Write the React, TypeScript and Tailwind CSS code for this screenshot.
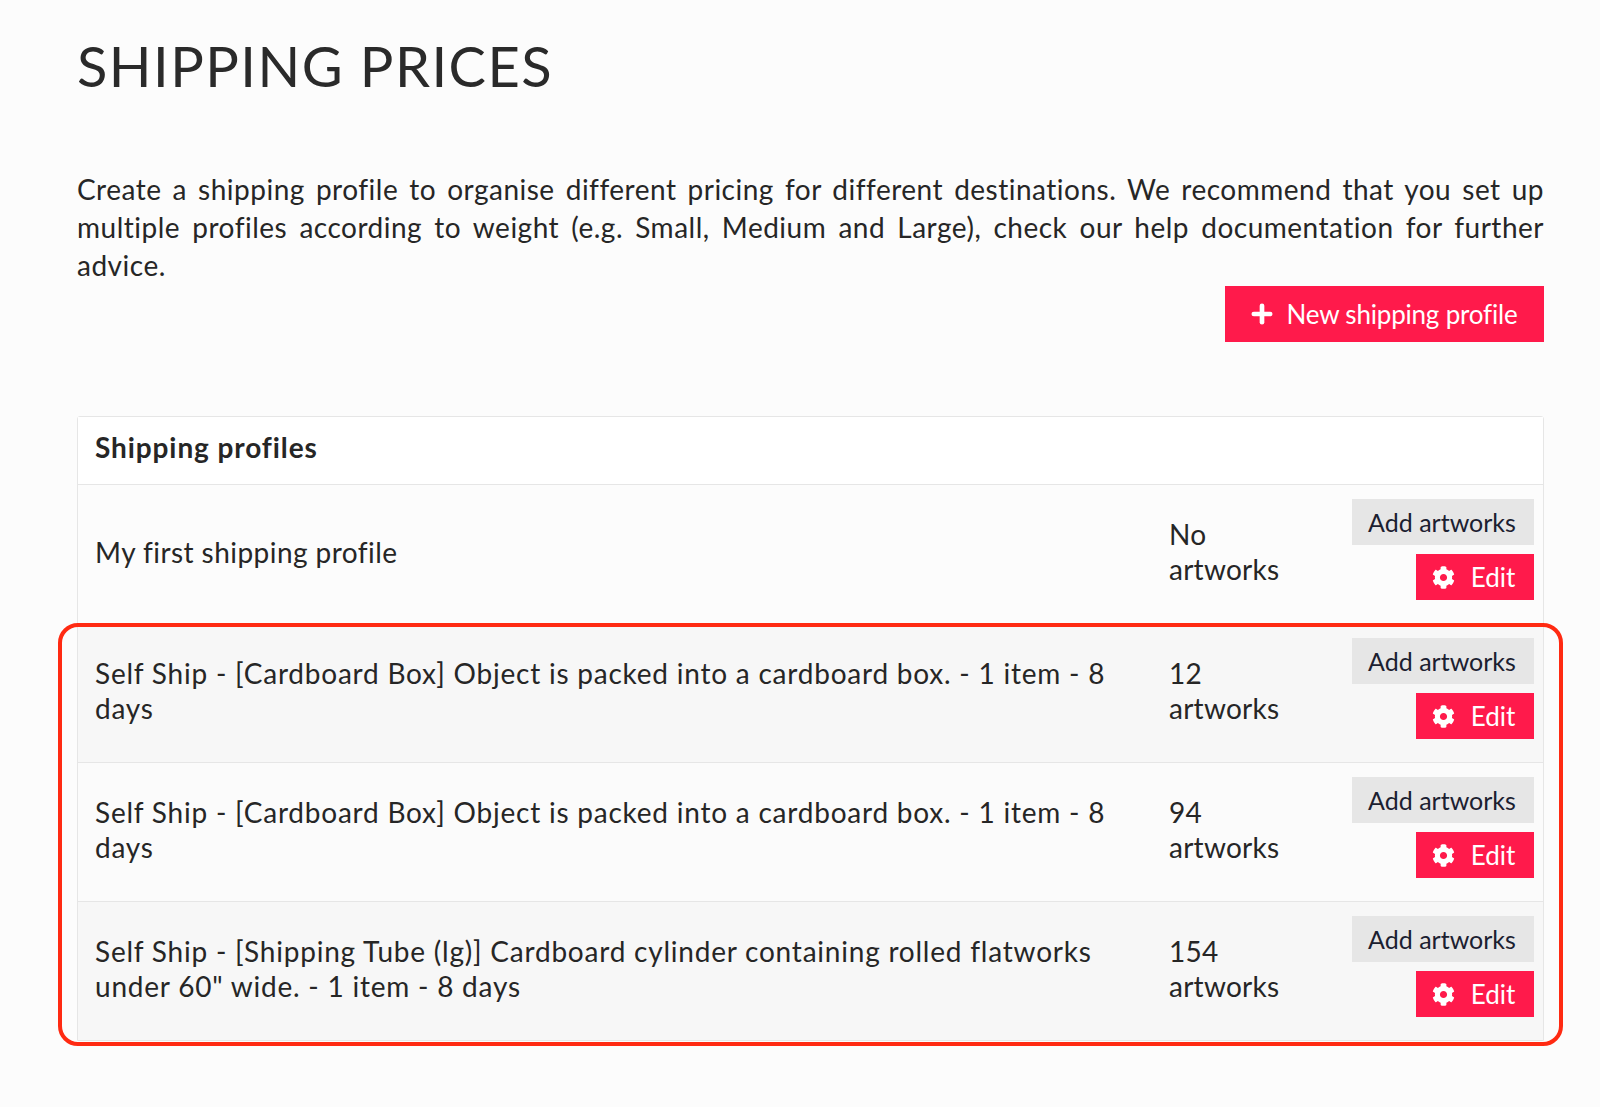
import { Plus } from "lucide-react";
import { FaCog } from "react-icons/fa";

const rows = [
  { name: "My first shipping profile", count: "No", tint: "", track: "tracking-[0.45px]" },
  { name: "Self Ship - [Cardboard Box] Object is packed into a cardboard box. - 1 item - 8 days", count: "12", tint: "bg-[#f7f7f7]", track: "tracking-[0.78px]" },
  { name: "Self Ship - [Cardboard Box] Object is packed into a cardboard box. - 1 item - 8 days", count: "94", tint: "bg-[#fbfbfb]", track: "tracking-[0.78px]" },
  { name: "Self Ship - [Shipping Tube (lg)] Cardboard cylinder containing rolled flatworks under 60\" wide. - 1 item - 8 days", count: "154", tint: "bg-[#f7f7f7]", track: "tracking-[0.78px]" },
];

export default function App() {
  return (
    <div className="relative h-[1107px] overflow-hidden bg-[#fcfcfc] pt-[30px] pr-[56px] pl-[77px] font-['Lato',sans-serif] text-[#262626]">
      <h1 className="text-[56px] leading-[72px] tracking-[1.45px] text-[#2a2a2a]">SHIPPING PRICES</h1>

      <p className="mt-[68px] text-justify text-[28px] leading-[38px] tracking-[0.5px]">
        Create a shipping profile to organise different pricing for different destinations. We recommend that you set up multiple profiles according to weight (e.g. Small, Medium and Large), check our help documentation for further advice.
      </p>

      <div className="mt-[2px] flex justify-end">
        <button className="flex h-[56px] w-[319px] items-center justify-center gap-[11px] bg-[#ff1a4b] pr-[4px] text-[26px] tracking-[-0.2px] text-white">
          <Plus className="size-[28px]" strokeWidth={4} />
          New shipping profile
        </button>
      </div>

      <div className="mt-[74px] rounded-t-[3px] border border-[#e6e6e6]">
        <div className="flex h-[67px] items-center bg-white px-[17px] pb-[8px] text-[28px] font-bold tracking-[0.9px]">Shipping profiles</div>
        {rows.map((row) => (
          <div key={row.count} className={`flex h-[139px] items-center border-t border-[#e6e6e6] pr-[9px] pl-[17px] text-[28px] leading-[35px] ${row.tint}`}>
            <div className={`w-[1074px] shrink-0 pr-[40px] pb-[4px] ${row.track}`}>{row.name}</div>
            <div className="w-[150px] pr-[30px] pb-[4px] tracking-[0.25px]">{row.count} artworks</div>
            <div className="ml-auto flex flex-col items-end gap-[9px] self-start pt-[14px]">
              <button className="flex h-[46px] w-[182px] items-center justify-center bg-[#e6e6e6] pr-[2px] text-[25px] text-[#1b2030]">Add artworks</button>
              <button className="flex h-[46px] w-[118px] items-center justify-center gap-[16px] bg-[#ff1a4b] pr-[3px] text-[26px] text-white">
                <FaCog className="size-[23px]" />
                Edit
              </button>
            </div>
          </div>
        ))}
      </div>

      <div className="absolute top-[623px] left-[58px] h-[423px] w-[1505px] rounded-[20px] border-[4px] border-[#ff2a12]" />
    </div>
  );
}
